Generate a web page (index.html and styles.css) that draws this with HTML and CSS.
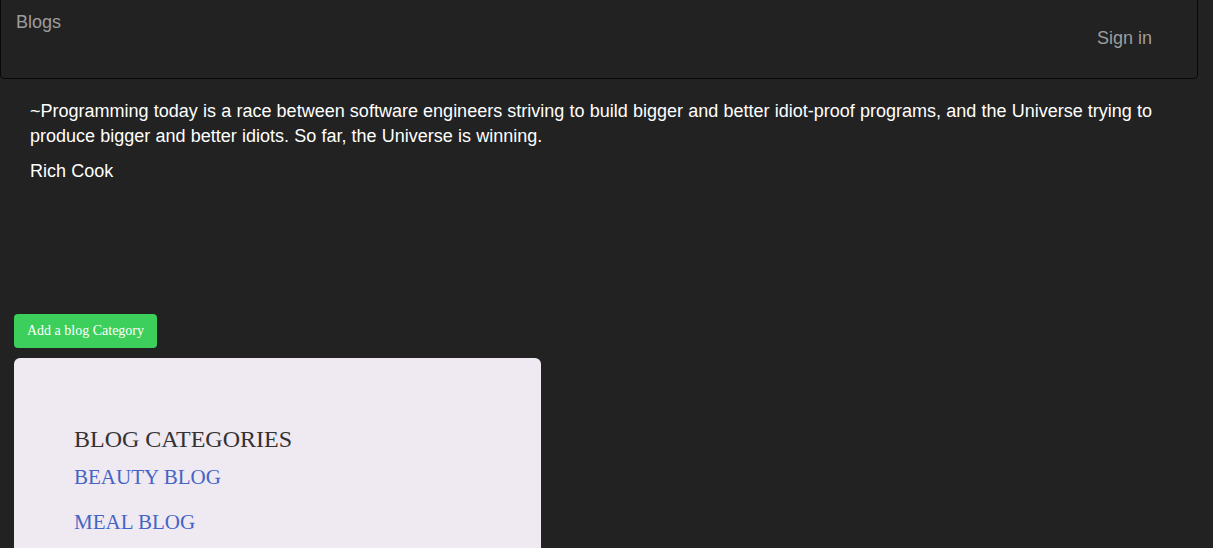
FILE: index.html
```html
<!DOCTYPE html>
<html>
<head>
<meta charset="utf-8">
<title>Blogs</title>
<link rel="stylesheet" href="styles.css">
</head>
<body>
<nav class="navbar">
  <a class="brand" href="#">Blogs</a>
  <a class="signin" href="#">Sign in</a>
</nav>
<section class="quote">
  <p>~Programming today is a race between software engineers striving to build bigger and better idiot-proof programs, and the Universe trying to produce bigger and better idiots. So far, the Universe is winning.</p>
  <p>Rich Cook</p>
</section>
<main class="content">
  <button class="add-btn">Add a blog Category</button>
  <div class="card">
    <h2 class="card-title">BLOG CATEGORIES</h2>
    <a class="cat-link" href="#">BEAUTY BLOG</a>
    <a class="cat-link" href="#">MEAL BLOG</a>
  </div>
</main>
</body>
</html>
```
FILE: styles.css
```css
html, body {
  margin: 0;
  padding: 0;
  background: #222222;
}
body {
  font-family: "Liberation Sans", Arial, sans-serif;
  overflow: hidden;
}
.navbar {
  box-sizing: border-box;
  height: 80px;
  margin-top: -1px;
  margin-right: 15px;
  border: 1px solid #080808;
  border-radius: 0 0 4px 4px;
  background: #222222;
  display: flex;
  justify-content: space-between;
  align-items: flex-start;
}
.brand {
  color: #9d9d9d;
  text-decoration: none;
  font-size: 18px;
  line-height: 20px;
  padding: 12px 0 0 15px;
}
.signin {
  color: #9d9d9d;
  text-decoration: none;
  font-size: 18px;
  line-height: 20px;
  padding: 28px 45px 0 0;
}
.quote {
  padding: 20px 30px 0 30px;
  margin-right: 11px;
}
.quote p {
  margin: 0 0 10px 0;
  color: #ffffff;
  font-size: 18px;
  line-height: 25px;
  word-spacing: 0.2px;
}
.content {
  padding: 120px 14px 0 14px;
  display: flex;
  flex-direction: column;
  align-items: flex-start;
}
.add-btn {
  height: 34px;
  padding: 0 13px;
  border: none;
  border-radius: 4px;
  background: #3ccf5c;
  color: #ffffff;
  font-family: "Liberation Serif", "Times New Roman", serif;
  font-size: 14px;
  cursor: pointer;
}
.card {
  box-sizing: border-box;
  width: 527px;
  height: 200px;
  margin-top: 10px;
  padding: 67px 60px 0 60px;
  background: #efe9f1;
  border-radius: 6px;
  display: flex;
  flex-direction: column;
  align-items: flex-start;
  font-family: "Liberation Serif", "Times New Roman", serif;
}
.card-title {
  margin: 0 0 12px 0;
  font-weight: normal;
  font-size: 24px;
  line-height: 28px;
  color: #333333;
}
.cat-link {
  display: block;
  color: #4564c6;
  text-decoration: none;
  font-size: 21px;
  line-height: 25px;
  margin-bottom: 20px;
}
```
